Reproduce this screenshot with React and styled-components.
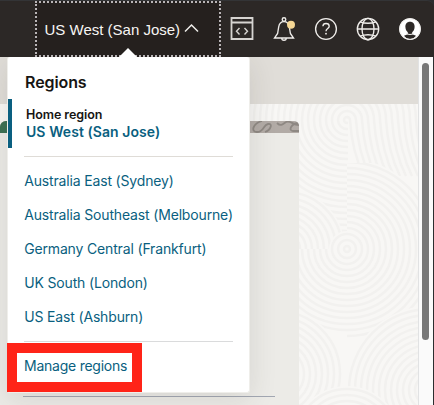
import React from "react";
import styled, { createGlobalStyle } from "styled-components";

const GlobalStyle = createGlobalStyle`
  * { box-sizing: border-box; }
  body { margin: 0; overflow: hidden; background: #2c2d2f; font-family: Inter, "Noto Sans", sans-serif; }
  button { font: inherit; }
`;

const Window = styled.div`
  position: relative;
  width: 434px;
  height: 405px;
  display: flex;
  flex-direction: column;
  overflow: hidden;
`;

const Header = styled.header`
  height: 57px;
  flex: none;
  display: flex;
  padding-left: 35px;
  background: #2c2826;
  border-top: 1px solid #333436;
  border-top-right-radius: 7px;
`;

const RegionButton = styled.button`
  width: 186px;
  height: 56px;
  flex: none;
  display: flex;
  align-items: center;
  gap: 4px;
  padding: 0 0 1px 7.5px;
  border: 2px dotted #b9b5b7;
  background: #25201e;
  color: #f7f5f3;
  font-family: "Liberation Sans", sans-serif;
  font-size: 15px;
  line-height: 20px;
  white-space: nowrap;
`;

const RegionName = styled.span`
  padding-top: 2px;
`;

const Tools = styled.nav`
  display: grid;
  grid-template-columns: repeat(5, 42.1px);
  justify-items: center;
  padding-top: 14px;
  margin-left: -0.4px;
`;

const Icon = styled.svg`
  display: block;
  flex: none;
  overflow: visible;
  fill: none;
  stroke: ${(p) => p.$tone || "#efedea"};
  stroke-width: ${(p) => p.$weight || 1.35};
`;

const Body = styled.div`
  flex: 1;
  display: flex;
  padding-right: 1px;
`;

const Page = styled.main`
  position: relative;
  width: 418px;
  flex: none;
  background: #f8f7f5;
  overflow: hidden;
`;

const Banner = styled.div`
  height: 47px;
  background: #e0ddd8;
`;

const Content = styled.div`
  position: relative;
  height: 301px;
  padding-top: 17px;
`;

const Backdrop = styled.svg`
  position: absolute;
  inset: 0;
  display: block;
`;

const Card = styled.section`
  position: relative;
  width: 299px;
  height: 284px;
  display: flex;
  flex-direction: column;
  align-items: flex-start;
  border-radius: 6px 5px 0 0;
  overflow: hidden;
  background: #ecebe7;
`;

const CardArt = styled.svg`
  display: block;
  flex: none;
`;

const CardRule = styled.div`
  width: 252px;
  height: 1px;
  margin: 263px 0 0 23px;
  background: #a2a7b2;
`;

const ScrollTrack = styled.div`
  width: 15px;
  height: 348px;
  padding: 6px 0 0 3px;
  background: #fafafa;
  border-left: 1px solid #e1e2e3;
`;

const ScrollThumb = styled.div`
  width: 7px;
  height: 277px;
  border-radius: 4px;
  background: #777;
`;

const Popover = styled.aside`
  position: absolute;
  left: 7px;
  top: 57px;
  width: 243px;
  height: 336px;
  padding: 16px 17px 0;
  background: #fff;
  border: 1px solid #efeeea;
  border-top: 0;
  border-radius: 3px;
  box-shadow: 0 6px 28px rgba(50, 46, 38, 0.12);
  clip-path: inset(0 -50px -50px -50px);
`;

const Pointer = styled.svg`
  position: absolute;
  left: 119px;
  top: 48px;
`;

const Title = styled.h2`
  margin: 0;
  height: 19px;
  font-size: 16px;
  line-height: 19px;
  font-weight: 600;
  letter-spacing: -0.1px;
  color: #161513;
`;

const HomeRegion = styled.div`
  height: 49px;
  margin: 7px 0 0 -17px;
  padding: 8px 0 0 14px;
  border-left: 4px solid #0a5f80;
  color: #161513;
`;

const HomeLabel = styled.div`
  font-size: 12.5px;
  line-height: 16px;
  font-weight: 600;
  letter-spacing: -0.08px;
`;

const HomeName = styled.div`
  font-size: 14px;
  line-height: 18px;
  font-weight: 600;
  letter-spacing: 0.07px;
  color: #0a5f80;
`;

const Divider = styled.div`
  height: 1px;
  margin: ${(p) => p.$top}px -1px 0 -1px;
  background: ${(p) => p.$tone};
`;

const RegionList = styled.ul`
  list-style: none;
  margin: 7px 0 0;
  padding: 0;
`;

const RegionItem = styled.li`
  height: 34px;
  line-height: 34px;
  margin-left: -0.8px;
  font-size: 14px;
  letter-spacing: -0.16px;
  color: #0a5f80;
  white-space: nowrap;
`;

const ManageLink = styled.div`
  height: 34px;
  margin: 7px 0 0 -1px;
  line-height: 34px;
  font-size: 14px;
  letter-spacing: -0.24px;
  color: #0a5f80;
`;

const Highlight = styled.div`
  position: absolute;
  left: 7px;
  top: 343px;
  width: 135px;
  height: 49px;
  border: 10px solid #ff2418;
`;

const regions = [
  "Australia East (Sydney)",
  "Australia Southeast (Melbourne)",
  "Germany Central (Frankfurt)",
  "UK South (London)",
  "US East (Ashburn)",
];

function Rings({ x, y, count, clip }) {
  const radius = count * 6;
  return (
    <g clipPath={clip ? `url(#${clip})` : undefined}>
      <circle cx={x} cy={y} r={radius} fill="#f8f7f5" />
      {Array.from({ length: count }, (_, i) => (
        <circle key={i} cx={x} cy={y} r={i * 6 + 3} fill="none" stroke="#f2f1ef" strokeWidth="2.5" />
      ))}
    </g>
  );
}

function Pattern() {
  return (
    <Backdrop width="418" height="301" viewBox="0 0 418 301">
      <defs>
        <clipPath id="leftSide"><rect x="240" y="0" width="108" height="301" /></clipPath>
        <clipPath id="rightHalf"><rect x="347" y="59" width="71" height="242" /></clipPath>
        <clipPath id="lowerHalf"><rect x="240" y="145" width="178" height="156" /></clipPath>
      </defs>
      <Rings x={347} y={16} count={25} clip="leftSide" />
      <g fill="none" stroke="#f2f1ef" strokeWidth="2.5">
        {Array.from({ length: 13 }, (_, i) => {
          const r = 3 + i * 6;
          return <path key={i} d={`M347 ${16 - r}A${r} ${r} 0 0 1 ${347 + r} 16Q${349 + r} 48 ${361 + r} 72`} />;
        })}
      </g>
      <Rings x={347} y={145} count={15} clip="rightHalf" />
      <Rings x={285} y={145} count={10} />
      <Rings x={347} y={145} count={14} clip="lowerHalf" />
      <Rings x={347} y={145} count={3} />
      <Rings x={277} y={270} count={11} />
      <Rings x={430} y={286} count={14} />
      <Rings x={347} y={336} count={9} />
    </Backdrop>
  );
}

function HeaderIcons() {
  return (
    <Tools>
      <Icon width="24" height="28" viewBox="0 0 24 28" $tone="#d6d4d1">
        <path d="M1.5 3h21v21h-21zM2 7.5h20" strokeWidth="1.8" />
        <path d="m9.5 13-3 3.2 3 3.2m5-6.4 3 3.2-3 3.2" strokeWidth="1.4" />
      </Icon>
      <Icon width="24" height="28" viewBox="0 0 24 28">
        <circle cx="12" cy="4.5" r="1.8" />
        <path d="M2.5 23h19l-3.1-4.5-1.1-6.7c-.5-3-2.1-5.2-5.3-5.2s-4.8 2.2-5.3 5.2l-1.1 6.7zM9.7 23a2.3 2.3 0 0 0 4.6 0" />
        <circle cx="19" cy="9.8" r="4" fill="#f5d795" stroke="none" />
      </Icon>
      <Icon width="24" height="28" viewBox="0 0 24 28">
        <circle cx="12" cy="14" r="10.4" />
        <path d="M8.9 11.3c.1-1.8 1.3-2.8 3.1-2.8 1.9 0 3.2 1.1 3.2 2.8 0 2.3-3.2 2.2-3.2 5" />
        <circle cx="12" cy="18.7" r=".9" fill="#efedea" stroke="none" />
      </Icon>
      <Icon width="24" height="28" viewBox="0 0 24 28">
        <circle cx="12" cy="14" r="10.7" />
        <ellipse cx="12" cy="14" rx="6" ry="10.7" />
        <path d="M1 14h22M4 6.8q8 3 16 0M4 21.2q8-3 16 0" />
      </Icon>
      <Icon width="24" height="28" viewBox="0 0 24 28">
        <circle cx="12" cy="14" r="10.8" fill="#fff" stroke="none" />
        <path d="M12 6.7c-3 0-4.8 2.2-4.6 5.3.1 2.4 1.1 4.3 2.4 5.2v2.1L6 20.7c1.4 2 3.5 3.3 6 3.3s4.6-1.3 6-3.3l-3.8-1.4v-2.1c1.3-.9 2.3-2.8 2.4-5.2.2-3.1-1.6-5.3-4.6-5.3z" fill="#2c2826" stroke="none" />
        <path d="M8.5 18.5q3.5 2 7 0" strokeWidth="1.1" />
        <circle cx="12" cy="14" r="10.4" strokeWidth="1" />
      </Icon>
    </Tools>
  );
}

export default function App() {
  return (
    <>
      <GlobalStyle />
      <Window>
        <Header>
          <RegionButton>
            <RegionName>US West (San Jose)</RegionName>
            <Icon width="15" height="14" viewBox="0 0 15 14">
              <path d="m1 9.5 6.5-6.5L14 9.5" strokeWidth="1.5" />
            </Icon>
          </RegionButton>
          <HeaderIcons />
        </Header>
        <Body>
          <Page>
            <Banner />
            <Content>
              <Pattern />
              <Card>
                <CardArt width="299" height="12" viewBox="0 0 299 12">
                  <rect width="299" height="12" fill="#b2aba6" />
                  <rect width="75" height="12" fill="#3c7054" />
                  <g fill="none" stroke="#8e8883" strokeWidth="1.8">
                    <path d="M262 0c-10 3-11 11-5 11 7 0 6-7 11-8 5-1 3 6-3 8M277 2c4 4 6 1 9-1 5-2 6 3 13 3M299 2c-8 0-11 8-6 8h6" />
                  </g>
                </CardArt>
                <CardRule />
              </Card>
            </Content>
          </Page>
          <ScrollTrack>
            <ScrollThumb />
          </ScrollTrack>
        </Body>
        <Pointer width="18" height="9" viewBox="0 0 18 9">
          <path d="M0 9 9 0l9 9z" fill="#fff" />
        </Pointer>
        <Popover>
          <Title>Regions</Title>
          <HomeRegion>
            <HomeLabel>Home region</HomeLabel>
            <HomeName>US West (San Jose)</HomeName>
          </HomeRegion>
          <Divider $top={8} $tone="#dfdcd7" />
          <RegionList>
            {regions.map((name) => (
              <RegionItem key={name}>{name}</RegionItem>
            ))}
          </RegionList>
          <Divider $top={7} $tone="#dadbdc" />
          <ManageLink>Manage regions</ManageLink>
        </Popover>
        <Highlight />
      </Window>
    </>
  );
}
